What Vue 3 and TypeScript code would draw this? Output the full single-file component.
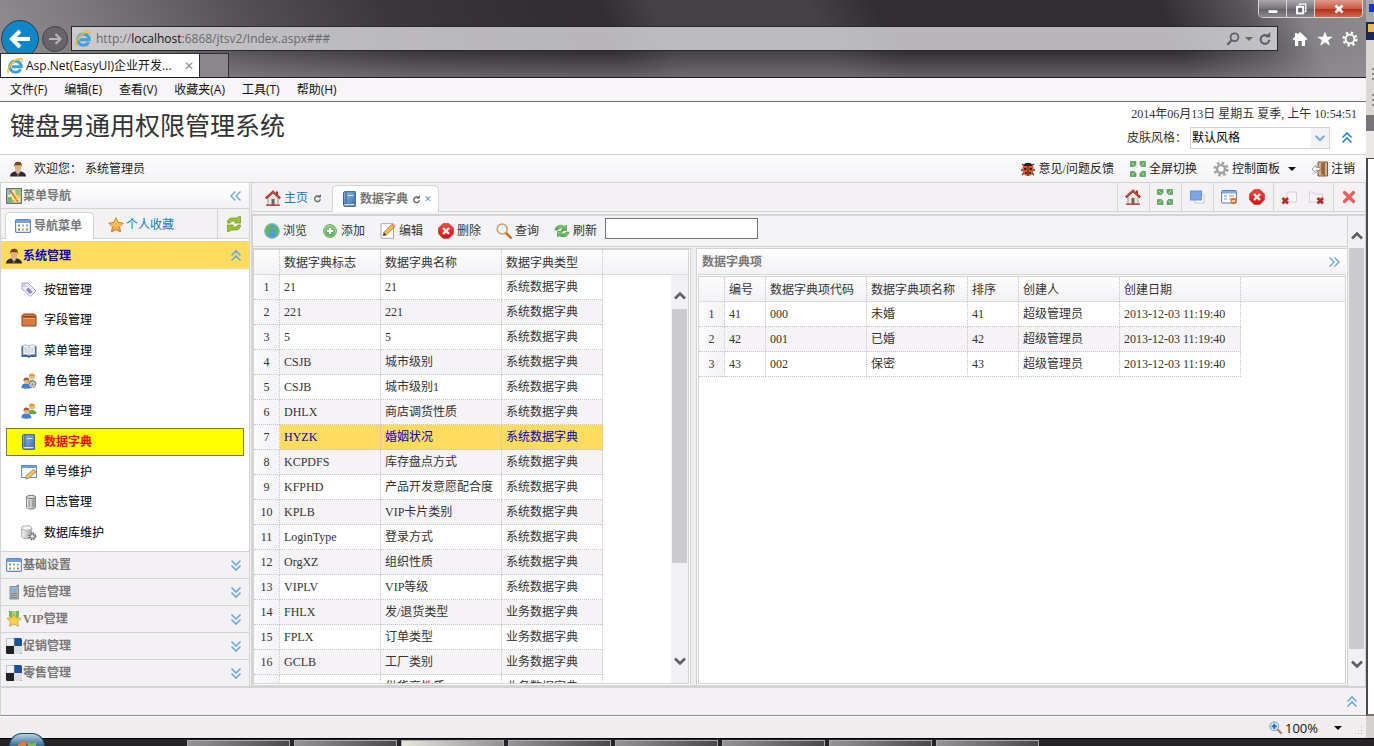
<script setup lang="ts">
import { ref } from 'vue'

interface MenuEntry { label: string; icon: string }

const browserMenus: string[] = ['文件(F)', '编辑(E)', '查看(V)', '收藏夹(A)', '工具(T)', '帮助(H)']

const navItems: MenuEntry[] = [
  { label: '按钮管理', icon: 'tag' },
  { label: '字段管理', icon: 'box' },
  { label: '菜单管理', icon: 'openbook' },
  { label: '角色管理', icon: 'roles' },
  { label: '用户管理', icon: 'users' },
  { label: '数据字典', icon: 'book' },
  { label: '单号维护', icon: 'edit-form' },
  { label: '日志管理', icon: 'bin' },
  { label: '数据库维护', icon: 'db' },
]

const sections: MenuEntry[] = [
  { label: '基础设置', icon: 'calendar' },
  { label: '短信管理', icon: 'phone' },
  { label: 'VIP管理', icon: 'medal' },
  { label: '促销管理', icon: 'delicious' },
  { label: '零售管理', icon: 'delicious' },
]

const tools: MenuEntry[] = [
  { label: '浏览', icon: 'globe' },
  { label: '添加', icon: 'add' },
  { label: '编辑', icon: 'pencil' },
  { label: '删除', icon: 'delete' },
  { label: '查询', icon: 'search' },
  { label: '刷新', icon: 'refresh' },
]

const tabToolGroups: MenuEntry[][] = [
  [{ label: '主页', icon: 'home' }],
  [{ label: '全屏', icon: 'fullscreen' }],
  [{ label: '窗口', icon: 'windows' }],
  [{ label: '关闭当前', icon: 'form-minus' }, { label: '关闭全部', icon: 'delete' }],
  [{ label: '关闭左侧', icon: 'close-left' }, { label: '关闭右侧', icon: 'close-right' }],
  [{ label: '退出', icon: 'cross' }],
]

const dictHead: string[] = ['数据字典标志', '数据字典名称', '数据字典类型']
const sys = '系统数据字典'
const biz = '业务数据字典'
const dictRows: string[][] = [
  ['21', '21', sys],
  ['221', '221', sys],
  ['5', '5', sys],
  ['CSJB', '城市级别', sys],
  ['CSJB', '城市级别1', sys],
  ['DHLX', '商店调货性质', sys],
  ['HYZK', '婚姻状况', sys],
  ['KCPDFS', '库存盘点方式', sys],
  ['KFPHD', '产品开发意愿配合度', sys],
  ['KPLB', 'VIP卡片类别', sys],
  ['LoginType', '登录方式', sys],
  ['OrgXZ', '组织性质', sys],
  ['VIPLV', 'VIP等级', sys],
  ['FHLX', '发/退货类型', biz],
  ['FPLX', '订单类型', biz],
  ['GCLB', '工厂类别', biz],
  ['GHSXZ', '供货商性质', biz],
]

const itemHead: string[] = ['编号', '数据字典项代码', '数据字典项名称', '排序', '创建人', '创建日期']
const itemRows: string[][] = [
  ['41', '000', '未婚', '41', '超级管理员', '2013-12-03 11:19:40'],
  ['42', '001', '已婚', '42', '超级管理员', '2013-12-03 11:19:40'],
  ['43', '002', '保密', '43', '超级管理员', '2013-12-03 11:19:40'],
]

const activeNav = ref(5)
const activeRow = ref(6)
const query = ref('')
const address = 'http://localhost:6868/jtsv2/Index.aspx###'
const addressParts = [address.slice(0, 7), address.slice(7, 16), address.slice(16)]
</script>

<template>
  <div class="screen">
    <svg class="sprite" aria-hidden="true">
      <defs>
        <linearGradient id="g-blue" x1="0" y1="0" x2="1" y2="1"><stop offset="0" stop-color="#8fb9e6" /><stop offset="1" stop-color="#3f72b5" /></linearGradient>
        <linearGradient id="g-green" x1="0" y1="0" x2="0" y2="1"><stop offset="0" stop-color="#8ed07f" /><stop offset="1" stop-color="#4fa54b" /></linearGradient>
        <linearGradient id="g-red" x1="0" y1="0" x2="0" y2="1"><stop offset="0" stop-color="#f5483f" /><stop offset="1" stop-color="#d80f0f" /></linearGradient>
        <linearGradient id="g-gold" x1="0" y1="0" x2="0" y2="1"><stop offset="0" stop-color="#ffe27a" /><stop offset="1" stop-color="#f0952a" /></linearGradient>
        <linearGradient id="g-grey" x1="0" y1="0" x2="1" y2="0"><stop offset="0" stop-color="#f4f4f4" /><stop offset="1" stop-color="#a2a2a2" /></linearGradient>
      </defs>
      <symbol id="ie" viewBox="0 0 16 16">
        <path d="M13.600 11.200A5.700 5.700 0 1 1 14.200 8.700H5" fill="none" stroke="#3ba0dc" stroke-width="3" />
        <path d="M1.600 15C-.4 12.600 3 5.600 8 2.600 12.600 0 16 0 15.300 3.800" fill="none" stroke="#f3bd27" stroke-width="1.700" />
      </symbol>
      <symbol id="person" viewBox="0 0 16 16">
        <path d="M0 15.500c0-3 2.600-4.500 5-5h6c2.400.5 5 2 5 5z" fill="#2c2d33" />
        <path d="M6 10.500h4l-2 5z" fill="#f4f4f4" /><path d="M7.500 11.500h1l.5 3-1 1-1-1z" fill="#b23c32" />
        <ellipse cx="8" cy="6.500" rx="3.200" ry="4" fill="#e6b27c" /><path d="M4.300 6C3.800 2 6 .8 8.200.8S12.300 2 11.700 6l-1-2c-2 .6-4 .2-5.200 0z" fill="#6f4a20" />
      </symbol>
      <symbol id="map" viewBox="0 0 16 16">
        <rect x=".7" y=".7" width="14.600" height="14.600" fill="#f3e9a0" stroke="#4c6570" stroke-width="1.200" />
        <path d="M1.500 1.500h5l-2 5h-3z" fill="#82bce8" /><path d="M9 1.500h5.500v6H10z" fill="#98c77a" /><path d="M1.500 9h4l2 5.500h-6z" fill="#76b276" />
        <path d="M4 2l8 12" stroke="#e46a22" stroke-width="1.500" /><path d="M14.500 7L7 14" stroke="#f3b635" stroke-width="1.400" />
      </symbol>
      <symbol id="calendar" viewBox="0 0 16 16">
        <rect x=".6" y="1.600" width="14.800" height="12.800" rx="1" fill="#fff" stroke="#6288bd" stroke-width="1.200" /><path d="M1 2h14v3H1z" fill="#72a1dc" />
        <path d="M3 7.500h2M3 11.500h2" stroke="#66a856" stroke-width="2" /><path d="M7 7.500h2M11 7.500h2" stroke="#7bb2e0" stroke-width="2" /><path d="M7 11.500h2" stroke="#e5b03c" stroke-width="2" /><path d="M11 11.500h2" stroke="#df6c54" stroke-width="2" />
      </symbol>
      <symbol id="star" viewBox="0 0 16 16"><path d="M8 .8l2.200 4.700 5 .7-3.600 3.600.9 5.100L8 12.500l-4.500 2.400.9-5.100L.8 6.200l5-.7z" fill="url(#g-gold)" stroke="#cf7a25" /></symbol>
      <symbol id="refresh" viewBox="0 0 16 16">
        <path d="M1 7C1.500 2.500 7 1 11 3.500L12.500 2v5.500H7L9 5.500C7 4.600 4.500 5 4 7z" fill="url(#g-green)" stroke="#4a9a47" stroke-width=".7" />
        <path d="M15 9c-.5 4.500-6 6-10 3.500L3.500 14V8.500H9L7 10.500c2 .9 4.500.5 5-1.500z" fill="url(#g-green)" stroke="#4a9a47" stroke-width=".7" />
      </symbol>
      <symbol id="sync" viewBox="0 0 16 16">
        <path d="M1.500 7c0-3.500 2-5 5-5h4.500L13 .5h1.500V7H8.500l2-2H7C4.800 5 4.500 6 4.500 7z" fill="#99c630" stroke="#6a941d" stroke-width=".7" />
        <path d="M14.500 9c0 3.500-2 5-5 5H5L3 15.500H1.500V9h6l-2 2H9c2.200 0 2.500-1 2.500-2z" fill="#99c630" stroke="#6a941d" stroke-width=".7" />
      </symbol>
      <symbol id="home" viewBox="0 0 16 16">
        <path d="M3 7.500L8 3l5 4.500V15H3z" fill="#eee9df" stroke="#8b8378" stroke-width=".8" /><path d="M11 1.500h2V5h-2z" fill="#ad3528" />
        <path d="M.8 8.400L8 1.700l7.200 6.700" fill="none" stroke="#a82b20" stroke-width="2.300" /><path d="M1.700 7.400L8 1.700l6.300 5.700" fill="none" stroke="#e7694f" stroke-width=".8" />
        <path d="M6.500 9h3v6h-3z" fill="#65666c" /><path d="M1 15.200h14" stroke="#b24538" stroke-width="1.400" />
      </symbol>
      <symbol id="book" viewBox="0 0 16 16">
        <path d="M3 .7h10.300v14.600H3c-1 0-1.400-.6-1.400-1.400V2C1.600 1.200 2 .7 3 .7z" fill="url(#g-blue)" stroke="#335782" /><path d="M4 1v12" stroke="#345f94" /><path d="M6 4.500h5.500" stroke="#dceafa" /><path d="M2.500 13.700h10" stroke="#e6eef7" stroke-width="1.200" />
      </symbol>
      <symbol id="globe" viewBox="0 0 16 16"><circle cx="8" cy="8" r="7.300" fill="#4c9edc" stroke="#8cc4a0" stroke-width="1.200" /><path d="M2 5c1-2.500 4-4 6-3.500L7 4l2 2-3 2-1 5-3-3zM10 3l3 1 1.500 4-2 5-2-3 1-2-3-2z" fill="#62b45d" /></symbol>
      <symbol id="add" viewBox="0 0 16 16"><circle cx="8" cy="8" r="6.400" fill="url(#g-green)" stroke="#67a861" /><circle cx="8" cy="8" r="5.500" fill="none" stroke="#a9dba0" stroke-width=".8" /><path d="M8 5v6M5 8h6" stroke="#fff" stroke-width="2.200" /></symbol>
      <symbol id="pencil" viewBox="0 0 16 16"><path d="M1 .7h12.500v14.600H1z" fill="#fff" stroke="#aaa7b8" /><path d="M3 12.800l1-3.500L11.700 1.500l2.800 2.400-8 8z" fill="#f4bb45" stroke="#a9772b" stroke-width=".8" /><path d="M3 12.800l1-3.500 2.500 2.600z" fill="#514a42" /><path d="M11.700 1.500l1-.9 2.700 2.500-.9.800z" fill="#e67c76" /></symbol>
      <symbol id="delete" viewBox="0 0 16 16"><path d="M5 .7h6L15.300 5v6L11 15.300H5L.7 11V5z" fill="url(#g-red)" stroke="#cd3c39" /><path d="M5 5l6 6M11 5l-6 6" stroke="#fff" stroke-width="2.400" /></symbol>
      <symbol id="search" viewBox="0 0 16 16"><path d="M10 10l4.700 4.700" stroke="#c87532" stroke-width="2.600" stroke-linecap="round" /><circle cx="6.200" cy="6" r="5" fill="#edf4fb" stroke="#d79b59" stroke-width="1.500" /><path d="M3.500 5c.5-1.500 1.500-2 3-2" stroke="#fff" stroke-width="1.300" fill="none" /></symbol>
      <symbol id="tag" viewBox="0 0 16 16"><path d="M1 1h6l8 8-5.500 5.500L1 7z" fill="#f2effb" stroke="#a5a0c8" /><circle cx="3.600" cy="3.600" r="1.100" fill="#fff" stroke="#9b95c0" stroke-width=".8" /><path d="M7 5.500l4.500 4.500-2.500 2L5 8z" fill="#8d7cd8" /></symbol>
      <symbol id="box" viewBox="0 0 16 16"><path d="M1 3.500L2.500 2h11L15 3.500V14H1z" fill="#d87a3c" stroke="#8f4420" /><path d="M1.500 4h13v1.500h-13z" fill="#8b431c" /><path d="M2 6.500h12" stroke="#eda776" /></symbol>
      <symbol id="openbook" viewBox="0 0 16 16"><path d="M.5 3h15v11h-6L8 15l-1.500-1h-6z" fill="#356297" /><path d="M2 2.500c2-1 4-.6 6 .7 2-1.300 4-1.700 6-.7V12c-2-.8-4-.5-6 .7-2-1.200-4-1.500-6-.7z" fill="#fff" stroke="#7b96b6" stroke-width=".7" /><path d="M8 3v9M3.500 5h3M3.500 7h3M3.500 9h3M9.500 5h3M9.500 7h3M9.500 9h3" stroke="#8ba0b8" stroke-width=".8" /></symbol>
      <symbol id="users" viewBox="0 0 16 16">
        <path d="M7.500 11c0-3 1-4 3.500-4s4.500 1.500 4.500 3.500c-2 1-4 1-8 .5z" fill="#62a749" /><circle cx="11" cy="4" r="2.800" fill="#eeb77c" /><path d="M8 3.500C8 1 9.500.5 11 .5s3 .8 3 3c-2-1-4-1-6 0z" fill="#d49a38" />
        <path d="M.5 15c0-3.500 1.500-4.500 4.500-4.500s5 1 5.500 4.500c-3 1-7 1-10 0z" fill="#3f7fda" /><circle cx="5.500" cy="8" r="2.800" fill="#eeb27b" /><path d="M2.500 8C2.500 5 4 4.500 5.500 4.500s3 .8 3 3.500c-2-1.300-4-1.300-6 0z" fill="#9b5b2c" />
      </symbol>
      <symbol id="roles" viewBox="0 0 16 16"><use href="#users" /><circle cx="11.500" cy="11.500" r="3" fill="#e6e6e6" stroke="#8c8f91" stroke-width="1.600" stroke-dasharray="1.600 .8" /><circle cx="11.500" cy="11.500" r="1.200" fill="#888" /></symbol>
      <symbol id="edit-form" viewBox="0 0 16 16"><rect x=".6" y="1.500" width="14.800" height="12" fill="#f6faff" stroke="#5f8dc9" /><path d="M1 2h14v2H1z" fill="#6b9fdd" /><path d="M4.500 15l1-3.500 7-6 2.500 2.500-7 6z" fill="#f5c05e" stroke="#a9782d" stroke-width=".8" /></symbol>
      <symbol id="bin" viewBox="0 0 16 16"><path d="M5.500 3h9v10.500c-1 2-8 2-9 0z" fill="url(#g-grey)" stroke="#828282" /><ellipse cx="10" cy="3" rx="4.700" ry="1.600" fill="#ddd" stroke="#777" /><path d="M8 6v7M12 6v7" stroke="#858585" /></symbol>
      <symbol id="db" viewBox="0 0 16 16"><path d="M.7 3v9c2 2 8 2 10 0V3z" fill="url(#g-grey)" stroke="#aaa" /><ellipse cx="5.700" cy="3" rx="5" ry="2.200" fill="#f6f6f6" stroke="#aaa" /><circle cx="11.300" cy="11.300" r="3.200" fill="#ddd" stroke="#707478" stroke-width="2" stroke-dasharray="1.500 1" /><circle cx="11.300" cy="11.300" r="2" fill="#eee" stroke="#707478" /></symbol>
      <symbol id="phone" viewBox="0 0 16 16"><path d="M4 2.500h7V1h1.500v14H4z" fill="#adb2b6" stroke="#777d82" stroke-width=".8" /><path d="M5.500 4.500h5V8h-5z" fill="#66b9ea" /><path d="M5.500 9.500h1M7.500 9.500h1M9.500 9.500h1M5.500 11.500h1M7.500 11.500h1M9.500 11.500h1M5.500 13.500h1M7.500 13.500h1M9.500 13.500h1" stroke="#57606a" /></symbol>
      <symbol id="medal" viewBox="0 0 16 16"><path d="M3 0h10v6l-5 2-5-2z" fill="#75b75d" /><path d="M6 0h4v6H6z" fill="#a9d48f" /><path d="M8 2.800l2.100 4 5 .6-3.500 3.100.9 4.800L8 13.200l-4.500 2.100.9-4.800L.9 7.400l5-.6z" fill="#f7ce45" stroke="#d49a34" stroke-width=".8" /></symbol>
      <symbol id="delicious" viewBox="0 0 16 16"><rect width="16" height="16" rx="1.500" fill="#1551a5" /><path d="M.3.300H8V8H.3z" fill="#f4f5f7" stroke="#c4c6ca" stroke-width=".6" /><path d="M0 8h8v8H1.500L0 14.500z" fill="#222225" /><path d="M8 8h8v6.500L14.500 16H8z" fill="#dadde2" /></symbol>
      <symbol id="fullscreen" viewBox="0 0 16 16"><g fill="#5fae5f" stroke="#3c9343" stroke-width=".6"><path d="M.5.500h5.500v3L4.500 5.500H.5zM15.500.500H10v3l1.500 2h4zM.5 15.500H6v-3l-1.500-2h-4zM15.500 15.500H10v-3l1.500-2h4z" /></g><path d="M1.800 1.800l2.500 2.500M14.200 1.800l-2.500 2.500M1.800 14.200l2.500-2.500M14.200 14.200l-2.500-2.500" stroke="#bfe6bb" /></symbol>
      <symbol id="windows" viewBox="0 0 16 16"><rect x="6" y="6" width="9" height="8" fill="#fff" stroke="#bdc7da" /><rect x="1.500" y="2" width="11" height="9" fill="#7ea5e6" stroke="#6a8fce" /></symbol>
      <symbol id="form-minus" viewBox="0 0 16 16"><rect x=".6" y="1.500" width="14.800" height="12.500" rx="1" fill="#fff" stroke="#5279bb" /><path d="M1 2h14v2.500H1z" fill="#80aae6" /><path d="M3 7h3M8 7h5M3 10h3M8 10h3" stroke="#739bd1" /><circle cx="12.500" cy="12" r="3.200" fill="#e47a28" /><path d="M10.800 12h3.400" stroke="#fff" stroke-width="1.200" /></symbol>
      <symbol id="close-left" viewBox="0 0 16 16"><path d="M6 3h9.500v10H6z" fill="#f6f4f7" stroke="#d4d0d6" /><path d="M1.500 9l5.500 5.500M7 9l-5.500 5.500" stroke="#b92828" stroke-width="2.800" /></symbol>
      <symbol id="close-right" viewBox="0 0 16 16"><path d="M.5 3h3l1 2h9v8H.5z" fill="#f6f4f7" stroke="#d4d0d6" /><path d="M8.500 9l5.500 5.500M14 9l-5.500 5.500" stroke="#b92828" stroke-width="2.800" /></symbol>
      <symbol id="cross" viewBox="0 0 16 16"><path d="M3.500 3.500l9 9M12.500 3.500l-9 9" stroke="#ec5d5b" stroke-width="3.200" stroke-linecap="round" /></symbol>
      <symbol id="bug" viewBox="0 0 16 16"><path d="M2 3l3 2M14 3l-3 2M1 9h14M2 14l3-3M14 14l-3-3" stroke="#35302f" stroke-width="1.300" /><path d="M4 4C4 1 12 1 12 4v2H4z" fill="#282425" /><path d="M3 5h10c2 5-1 10-5 10S1 10 3 5z" fill="#e8562a" /><path d="M8 5v10" stroke="#3b2320" /><circle cx="5.200" cy="8" r="1.200" fill="#2c2020" /><circle cx="10.800" cy="8" r="1.200" fill="#2c2020" /><circle cx="6" cy="12" r="1" fill="#2c2020" /><circle cx="10" cy="12" r="1" fill="#2c2020" /></symbol>
      <symbol id="gear" viewBox="0 0 16 16"><circle cx="8" cy="8" r="6.300" fill="none" stroke="currentColor" stroke-width="2.600" stroke-dasharray="2.500 2.448" /><circle cx="8" cy="8" r="4" fill="none" stroke="currentColor" stroke-width="2.400" /></symbol>
      <symbol id="exit" viewBox="0 0 16 16"><path d="M6 1h9.500v14H6z" fill="#d7b284" stroke="#7f5933" /><path d="M9 2.500l4-1.500v14l-4-2z" fill="#9d6739" /><path d="M0 8l4-4v2.500h4v3H4V12z" fill="#fff" stroke="#8893a4" stroke-width=".9" /></symbol>
      <symbol id="up2" viewBox="0 0 16 16"><path d="M3.500 7.500L8 3l4.500 4.500M3.500 12.500L8 8l4.500 4.500" fill="none" stroke="currentColor" stroke-width="1.600" /></symbol>
      <symbol id="down2" viewBox="0 0 16 16"><path d="M3.500 3.500L8 8l4.500-4.500M3.500 8.500L8 13l4.500-4.500" fill="none" stroke="currentColor" stroke-width="1.600" /></symbol>
      <symbol id="left2" viewBox="0 0 16 16"><path d="M7.500 3.500L3 8l4.500 4.500M12.500 3.500L8 8l4.500 4.500" fill="none" stroke="currentColor" stroke-width="1.400" /></symbol>
      <symbol id="right2" viewBox="0 0 16 16"><path d="M3.500 3.500L8 8l-4.500 4.500M8.500 3.500L13 8l-4.500 4.500" fill="none" stroke="currentColor" stroke-width="1.400" /></symbol>
      <symbol id="chev-up" viewBox="0 0 16 16"><path d="M3 10.500L8 5.500l5 5" fill="none" stroke="currentColor" stroke-width="2.600" /></symbol>
      <symbol id="chev-down" viewBox="0 0 16 16"><path d="M3 5.500l5 5 5-5" fill="none" stroke="currentColor" stroke-width="2.600" /></symbol>
      <symbol id="reload" viewBox="0 0 16 16"><path d="M12 5.500A5 5 0 1 0 13 9" fill="none" stroke="currentColor" stroke-width="2.400" /><path d="M8 6h6V0z" fill="currentColor" /></symbol>
      <symbol id="lens" viewBox="0 0 16 16"><circle cx="9.700" cy="6" r="4.500" fill="none" stroke="currentColor" stroke-width="2" /><path d="M6.500 9.500L1.500 14.500" stroke="currentColor" stroke-width="2.600" /></symbol>
      <symbol id="house" viewBox="0 0 16 16"><path d="M8 1l7.500 7-1.300 1.200L13 8.200V15H9.800v-5H6.200v5H3V8.200L1.800 9.200.5 8l2.500-2.300V2h2v1.800z" fill="currentColor" /></symbol>
      <symbol id="star-flat" viewBox="0 0 16 16"><path d="M8 .4l2 5.300h5.700l-4.500 3.500 1.700 5.600L8 11.500l-4.900 3.300 1.700-5.600L.3 5.700H6z" fill="currentColor" /></symbol>
      <symbol id="cog" viewBox="0 0 16 16"><circle cx="8" cy="8" r="6.400" fill="none" stroke="currentColor" stroke-width="2.400" stroke-dasharray="2.400 2.627" /><circle cx="8" cy="8" r="4.400" fill="none" stroke="currentColor" stroke-width="1.900" /></symbol>
      <symbol id="arrow-left" viewBox="0 0 24 24"><path d="M22 12H5M12 4l-8 8 8 8" fill="none" stroke="#fff" stroke-width="4" /></symbol>
      <symbol id="arrow-right" viewBox="0 0 16 16"><path d="M2 8h11M8.500 3l5 5-5 5" fill="none" stroke="#b5b3b6" stroke-width="2.200" /></symbol>
      <symbol id="magnify" viewBox="0 0 16 16"><path d="M9 9l5.500 5.500" stroke="#a88a5a" stroke-width="2.500" /><circle cx="6" cy="6" r="5" fill="#d7ebfb" stroke="#5f8fc4" /><path d="M6 3v6M3 6h6" stroke="#2368bd" stroke-width="2" /></symbol>
    </svg>

    <div class="desk">
      <main class="browser">
        <header class="chrome">
          <div class="title-row">
            <div class="win-btns">
              <button aria-label="最小化"><svg viewBox="0 0 16 16"><path d="M3 11h10" stroke="#fff" stroke-width="3" /></svg></button>
              <button aria-label="还原"><svg viewBox="0 0 16 16"><path d="M6 4V2.500h7.500V11H12" fill="none" stroke="#fff" stroke-width="1.400" /><rect x="3.500" y="5.500" width="7" height="7.500" fill="none" stroke="#fff" stroke-width="2.200" /></svg></button>
              <button class="close" aria-label="关闭"><svg viewBox="0 0 16 16"><path d="M4 4l8 8M12 4l-8 8" stroke="#fff" stroke-width="3" /></svg></button>
            </div>
          </div>
          <div class="address-row">
            <button class="back" aria-label="后退"><svg><use href="#arrow-left" /></svg></button>
            <button class="forward" aria-label="前进"><svg><use href="#arrow-right" /></svg></button>
            <div class="address">
              <svg class="i"><use href="#ie" /></svg>
              <span class="url">{{ addressParts[0] }}<b>{{ addressParts[1] }}</b>{{ addressParts[2] }}</span>
              <svg class="i14"><use href="#lens" /></svg><i class="caret"></i><svg class="i14"><use href="#reload" /></svg>
            </div>
            <div class="chrome-icons">
              <svg class="i"><use href="#house" /></svg><svg class="i"><use href="#star-flat" /></svg><svg class="i"><use href="#cog" /></svg>
            </div>
          </div>
          <div class="page-tabs">
            <div class="page-tab"><svg class="i"><use href="#ie" /></svg><span>Asp.Net(EasyUI)企业开发...</span><button aria-label="关闭标签">✕</button></div>
            <button class="new-tab" aria-label="新标签"></button>
          </div>
        </header>
        <nav class="menubar"><button v-for="m in browserMenus" :key="m">{{ m }}</button></nav>

        <section class="app-head">
          <h1>键盘男通用权限管理系统</h1>
          <div class="head-right">
            <time>2014年06月13日 星期五 夏季, 上午 10:54:51</time>
            <div class="skin">
              <label for="skin">皮肤风格：</label>
              <div class="combo"><select id="skin"><option>默认风格</option></select><svg class="i combo-arrow"><use href="#chev-down" /></svg></div>
              <svg class="i link"><use href="#up2" /></svg>
            </div>
          </div>
        </section>
        <section class="welcome">
          <svg class="i"><use href="#person" /></svg><span class="hello">欢迎您：</span><span>系统管理员</span>
          <div class="actions">
            <button><svg class="i"><use href="#bug" /></svg>意见/问题反馈</button>
            <button><svg class="i"><use href="#fullscreen" /></svg>全屏切换</button>
            <button><svg class="i grey"><use href="#gear" /></svg>控制面板<i class="caret dark"></i></button>
            <button><svg class="i"><use href="#exit" /></svg>注销</button>
          </div>
        </section>

        <div class="work">
          <aside class="side">
            <div class="side-title"><svg class="i"><use href="#map" /></svg><b>菜单导航</b><svg class="i pale end"><use href="#left2" /></svg></div>
            <div class="side-tabs">
              <button class="side-tab on"><svg class="i"><use href="#calendar" /></svg>导航菜单</button>
              <button class="side-tab"><svg class="i"><use href="#star" /></svg>个人收藏</button>
              <button class="sync" aria-label="刷新菜单"><svg class="i"><use href="#sync" /></svg></button>
            </div>
            <div class="accordion">
              <button class="acc open"><svg class="i"><use href="#person" /></svg><b>系统管理</b><svg class="i pale end"><use href="#up2" /></svg></button>
              <ul>
                <li v-for="(n, k) in navItems" :key="n.label"><button :class="{ on: k === activeNav }" @click="activeNav = k"><svg class="i"><use :href="'#' + n.icon" /></svg>{{ n.label }}</button></li>
              </ul>
              <button v-for="s in sections" :key="s.label" class="acc"><svg class="i"><use :href="'#' + s.icon" /></svg><b>{{ s.label }}</b><svg class="i pale end"><use href="#down2" /></svg></button>
            </div>
          </aside>

          <section class="center">
            <div class="tabbar">
              <button class="tab"><svg class="i"><use href="#home" /></svg>主页<svg class="i8"><use href="#reload" /></svg></button>
              <button class="tab on"><svg class="i"><use href="#book" /></svg><b>数据字典</b><svg class="i8"><use href="#reload" /></svg><i class="x">✕</i></button>
              <div class="tab-tools">
                <div v-for="(g, k) in tabToolGroups" :key="k" class="tool-group"><button v-for="t in g" :key="t.label" :aria-label="t.label"><svg class="i"><use :href="'#' + t.icon" /></svg></button></div>
              </div>
            </div>
            <div class="page">
              <div class="page-main">
                <div class="toolbar">
                  <button v-for="t in tools" :key="t.label"><svg class="i"><use :href="'#' + t.icon" /></svg>{{ t.label }}</button>
                  <input v-model="query" type="text" aria-label="查询内容">
                </div>
                <div class="split">
                  <div class="pane left">
                    <div class="grid-wrap">
                      <div class="head-strip"></div>
                      <table class="grid">
                        <colgroup><col class="c-no"><col class="c-m"><col class="c-l"><col class="c-m"></colgroup>
                        <thead><tr><th></th><th v-for="h in dictHead" :key="h">{{ h }}</th></tr></thead>
                        <tbody><tr v-for="(r, k) in dictRows" :key="k" :class="{ on: k === activeRow }" @click="activeRow = k"><td class="no">{{ k + 1 }}</td><td v-for="(c, j) in r" :key="j">{{ c }}</td></tr></tbody>
                      </table>
                      <div class="scroll inner"><svg class="i"><use href="#chev-up" /></svg><div class="thumb"></div><svg class="i"><use href="#chev-down" /></svg></div>
                    </div>
                  </div>
                  <div class="splitter"></div>
                  <div class="pane right">
                    <div class="pane-title"><b>数据字典项</b><svg class="i pale end"><use href="#right2" /></svg></div>
                    <div class="grid-wrap">
                      <div class="head-strip"></div>
                      <table class="grid">
                        <colgroup><col class="c-no"><col class="c-s"><col class="c-m"><col class="c-m"><col class="c-o"><col class="c-m"><col class="c-l"></colgroup>
                        <thead><tr><th></th><th v-for="h in itemHead" :key="h">{{ h }}</th></tr></thead>
                        <tbody><tr v-for="(r, k) in itemRows" :key="k"><td class="no">{{ k + 1 }}</td><td v-for="(c, j) in r" :key="j">{{ c }}</td></tr></tbody>
                      </table>
                    </div>
                  </div>
                </div>
              </div>
              <div class="scroll outer"><svg class="i"><use href="#chev-up" /></svg><div class="thumb"></div><svg class="i"><use href="#chev-down" /></svg></div>
            </div>
          </section>
        </div>
        <footer class="south"><svg class="i pale"><use href="#up2" /></svg></footer>
        <div class="status"><svg class="i14"><use href="#magnify" /></svg><span>100%</span><i class="caret dark"></i><i class="grip"></i></div>
      </main>
      <div class="edge"><div class="e1"></div><div class="e2"></div><div class="e3"></div><div class="e4"></div><div class="e5"></div></div>
    </div>
    <div class="taskbar"><i class="orb"><svg viewBox="0 0 20 12"><path d="M1 8q4-5 8-3v7H1z" fill="#e87932" /><path d="M11 5q4 3 8 0v7h-8z" fill="#82b94a" /></svg></i><span v-for="n in 8" :key="n" :class="{ lit: n === 3 }"></span></div>
  </div>
</template>

<style>
html, body, #app { height: 100%; }
body { margin: 0; overflow: hidden; }
</style>

<style scoped>
* { box-sizing: border-box; }
.screen { display: flex; flex-direction: column; height: 100vh; min-height: 600px; font: 12px/16px "Liberation Serif", "Noto Sans CJK SC", serif; color: #333; background: #fff; }
.sprite { position: absolute; width: 0; height: 0; }
button { font: inherit; color: inherit; border: 0; background: none; padding: 0; margin: 0; display: flex; align-items: center; white-space: nowrap; }
svg { display: block; flex: none; }
.i { width: 16px; height: 16px; }
.i14 { width: 14px; height: 14px; }
.i8 { width: 9px; height: 9px; color: #666; }
.end { margin-left: auto; }
.pale { color: #69aadd; }
.link { color: #1f84cc; }
.grey { color: #a3a3a3; }
.caret { width: 0; height: 0; border: 4px solid transparent; border-top-color: #666; border-bottom: 0; }
.caret.dark { border-top-color: #111; }
.desk { flex: 1; min-height: 0; display: flex; }
.browser { flex: 1; min-width: 0; display: flex; flex-direction: column; }

.chrome { height: 78px; flex: none; display: flex; flex-direction: column; border-bottom: 1px solid #1d1b1e; font-family: "Open Sans", "Noto Sans CJK SC", sans-serif; background: linear-gradient(to bottom, transparent 66%, rgba(150, 148, 152, .5) 100%), linear-gradient(65deg, #929093 0, #7b797c 8%, #514f52 20%, #39373a 30%, #302e31 42%, #302e31 45%, #444245 49%, #444245 60%, #302e31 65%, #302e31 85%, #58565a 91%, #858386 95%, #8c8a8d 100%); }
.title-row { height: 26px; display: flex; justify-content: flex-end; align-items: flex-start; padding-right: 3px; }
.win-btns { display: flex; border: 1px solid #d5d3d6; border-top: 0; border-radius: 0 0 5px 5px; overflow: hidden; }
.win-btns button { width: 28px; height: 17px; justify-content: center; background: linear-gradient(#aaa8ad, #77757a 50%, #626066 51%, #8a888e); border-right: 1px solid #d5d3d6; }
.win-btns .close { width: 47px; border-right: 0; background: linear-gradient(#dc9a8c, #cb5a45 50%, #b22b18 51%, #d3674a); }
.win-btns svg { width: 14px; height: 14px; }
.address-row { height: 25px; display: flex; align-items: center; padding: 0 8px 0 1px; }
.back { width: 38px; height: 38px; border-radius: 50%; background: #0e86c8; border: 1px solid #3b3a40; justify-content: center; flex: none; }
.back svg { width: 24px; height: 24px; }
.forward { width: 26px; height: 26px; margin: 0 3px; border-radius: 50%; background: #67656a; border: 1px solid #444247; justify-content: center; flex: none; }
.forward svg { width: 16px; height: 16px; }
.address { flex: 1; height: 25px; display: flex; align-items: center; gap: 5px; padding: 0 5px 0 3px; background: rgba(225, 224, 227, .77); border: 1px solid #29272a; color: #626064; }
.url { flex: 1; font-size: 12px; color: #6a686c; }
.url b { font-weight: 400; color: #151515; }
.chrome-icons { display: flex; gap: 9px; margin-left: 14px; color: #fff; }
.page-tabs { position: relative; flex: 1; display: flex; align-items: flex-end; }
.page-tab { width: 200px; height: 24px; display: flex; align-items: center; gap: 3px; padding: 0 5px 0 6px; background: #fff; border: 1px solid #302e32; border-bottom: 0; font-size: 12px; color: #111; white-space: nowrap; }
.page-tab button { margin-left: auto; color: #929092; font-size: 12px; }
.new-tab { width: 29px; height: 24px; background: #89878a; border: 1px solid #302e32; border-left: 0; border-bottom: 0; }
.menubar { height: 24px; flex: none; display: flex; align-items: center; gap: 17px; padding-left: 10px; background: #f7f5f8; border-bottom: 1px solid #706e72; font-family: "Open Sans", "Noto Sans CJK SC", sans-serif; color: #111; }

.app-head { height: 52px; flex: none; display: flex; justify-content: space-between; padding: 4px 9px 0 10px; background: #fff; }
h1 { margin: 0; font-size: 25px; line-height: 42px; font-weight: 400; letter-spacing: normal; }
.head-right { display: flex; flex-direction: column; align-items: flex-end; gap: 5px; }
.skin { display: flex; align-items: center; margin-right: 2px; }
.skin label { width: 63px; }
.combo { position: relative; width: 140px; height: 22px; border: 1px solid #d3d3d3; margin-right: 9px; background: #fff; }
.combo select { width: 100%; height: 20px; border: 0; appearance: none; background: transparent; font: inherit; color: #000; padding: 0 1px; }
.combo-arrow { position: absolute; right: 0; top: 0; width: 18px; height: 20px; padding: 2px; background: #f3f2f5; color: #77b3df; pointer-events: none; }
.welcome { height: 28px; flex: none; display: flex; align-items: center; padding: 0 10px; border-top: 1px solid #d3d3d3; background: linear-gradient(#fdfcfd, #f4f2f5); color: #222; }
.hello { margin-left: 8px; width: 51px; }
.actions { margin: 0 1px 0 auto; display: flex; gap: 16px; }
.actions button { gap: 3px; }
.actions .caret { margin-left: 5px; }

.work { flex: 1; min-height: 0; display: flex; gap: 1px; background: #f3f1f4; border-top: 1px solid #d3d3d3; }
.side { width: 250px; flex: none; display: flex; flex-direction: column; border: 1px solid #d3d3d3; border-width: 0 1px; background: #fff; }
.side-title { height: 26px; flex: none; display: flex; align-items: center; gap: 1px; padding: 0 5px; color: #777; background: linear-gradient(#fff, #f3f1f4); border-bottom: 1px solid #d3d3d3; }
.side-tabs { height: 30px; flex: none; display: flex; align-items: flex-end; padding-left: 4px; background: #f3f1f4; border-bottom: 1px solid #d3d3d3; }
.side-tab { height: 27px; padding: 0 10px 0 14px; gap: 2px; color: #0a7fc0; }
.side-tab.on { margin-bottom: -1px; background: #fff; border: 1px solid #d3d3d3; border-bottom: 0; border-radius: 5px 5px 0 0; color: #777; font-weight: 700; padding: 0 11px 0 9px; gap: 3px; }
.sync { margin-left: auto; width: 32px; height: 29px; justify-content: center; border-left: 1px solid #d3d3d3; }
.accordion { flex: 1; min-height: 0; display: flex; flex-direction: column; padding-top: 2px; }
.acc { height: 27px; flex: none; gap: 1px; padding: 0 5px; background: #f3f1f4; border-top: 1px solid #d3d3d3; color: #777; }
.acc.open { height: 28px; background: #ffdc5e; color: #00c; }
ul { flex: 1; min-height: 0; display: flex; flex-direction: column; list-style: none; margin: 0; padding: 6px 5px 3px; }
li { flex: 1; display: flex; padding: 1px 0; }
li button { flex: 1; padding-left: 14px; gap: 7px; border: 1px solid transparent; color: #000; }
li button.on { background: #ff0; border-color: #77774a; color: #f00; font-weight: 700; }

.center { flex: 1; min-width: 0; display: flex; flex-direction: column; border: 1px solid #d3d3d3; border-width: 0 1px 0 1px; }
.tabbar { height: 29px; flex: none; display: flex; align-items: flex-end; padding-left: 4px; border-bottom: 1px solid #d3d3d3; }
.tab { height: 26px; padding: 0 10px 0 9px; gap: 3px; color: #0a7fc0; }
.tab .i8 { margin-left: 2px; }
.tab.on { margin-bottom: -1px; height: 27px; padding: 0 6px 0 9px; gap: 2px; background: #fff; border: 1px solid #d3d3d3; border-bottom: 0; border-radius: 5px 5px 0 0; color: #777; }
.x { font: 700 9px/12px "DejaVu Sans", sans-serif; color: #6394c4; margin-left: 1px; }
.tab-tools { margin-left: auto; display: flex; height: 28px; border-left: 1px solid #d3d3d3; }
.tool-group { display: flex; align-items: center; gap: 12px; padding: 0 8px 0 7px; border-right: 1px solid #d3d3d3; }
.tool-group:last-child { border-right: 0; }
.page { flex: 1; min-height: 0; display: flex; margin-top: 2px; border-top: 2px solid #d3d3d3; }
.page-main { flex: 1; min-width: 0; display: flex; flex-direction: column; border: 1px solid #d3d3d3; border-top: 0; }
.toolbar { height: 31px; flex: none; display: flex; align-items: center; gap: 16px; padding-left: 11px; background: #f4f3f6; border-bottom: 1px solid #d3d3d3; }
.toolbar button { gap: 3px; width: 42px; }
.toolbar input { width: 153px; height: 21px; margin: 0 0 5px -7px; border: 1px solid #737176; background: #fff; padding: 0 4px; font: inherit; }
.split { flex: 1; min-height: 0; display: flex; padding-top: 1px; }
.pane { min-width: 0; display: flex; flex-direction: column; background: #fff; padding: 0 1px 1px 0; border-top: 1px solid #d3d3d3; }
.left { width: 437px; flex: none; }
.right { flex: 1; border-left: 1px solid #d3d3d3; padding: 0 1px 1px; }
.splitter { width: 6px; flex: none; background: #eeecef; border-left: 1px solid #d3d3d3; }
.pane-title { height: 26px; flex: none; display: flex; align-items: center; padding: 0 4px; color: #777; background: linear-gradient(#fff, #f3f1f4); border-bottom: 1px solid #d3d3d3; margin-bottom: 1px; }
.grid-wrap { position: relative; flex: 1; min-height: 0; overflow: hidden; border: 1px solid #d3d3d3; background: #fff; }
.head-strip { position: absolute; left: 0; right: 0; top: 0; height: 25px; background: linear-gradient(#fdfcfd, #f3f1f4); border-bottom: 1px solid #dddbdf; }
.grid { position: relative; table-layout: fixed; width: 0; border-collapse: separate; border-spacing: 0; }
.c-no { width: 26px; } .c-s { width: 41px; } .c-o { width: 51px; } .c-m { width: 101px; } .c-l { width: 121px; }
th, td { height: 25px; padding: 0 0 0 4px; font-weight: 400; text-align: left; white-space: nowrap; overflow: hidden; border-right: 1px dotted #c4c2c6; line-height: 16px; }
td { border-bottom: 1px dotted #c4c2c6; }
tbody tr:nth-child(even) td { background: #f5f3f6; }
tbody tr td.no { padding: 0; text-align: center; background: linear-gradient(90deg, #fbfafc, #f3f1f4); }
tbody tr.on td:not(.no) { background: #ffdc5e; color: #00c; }
.scroll { display: flex; flex-direction: column; align-items: center; background: #f1f0f3; color: #5f5d61; }
.scroll .thumb { width: 15px; background: #cbcacd; }
.inner { position: absolute; right: 0; top: 25px; bottom: 0; width: 17px; padding: 13px 0 14px; }
.inner .thumb { height: 254px; margin: 5px 0 auto; }
.outer { width: 17px; flex: none; padding: 12px 0 14px; }
.outer .thumb { flex: 1; margin: 4px 0 7px; }
.south { height: 30px; flex: none; display: flex; align-items: center; justify-content: flex-end; padding-right: 6px; background: #f3f1f4; border-top: 2px solid #d3d3d3; border-bottom: 1px solid #8d8b8e; border-left: 1px solid #d3d3d3; }
.status { height: 22px; flex: none; display: flex; align-items: center; justify-content: flex-end; padding-right: 3px; background: #f0edee; border-top: 1px solid #fff; font: 13px/16px "Open Sans", sans-serif; color: #111; }
.status span { margin: 0 16px 0 2px; }
.grip { width: 9px; height: 9px; margin: 6px 0 0 12px; background: radial-gradient(circle, #aaa 1px, transparent 1px) 0 0 / 3px 3px; clip-path: polygon(100% 0, 100% 100%, 0 100%); }

.edge { width: 8px; flex: none; display: flex; flex-direction: column; background: #d6d2cf; }
.e1 { height: 22px; background: linear-gradient(#1638c6, #1638c6) 3px 4px / 5px 8px no-repeat, #aaa7ab; }
.e2 { height: 18px; background: linear-gradient(#e6bb4a, #e6bb4a) 2px 2px / 6px 8px no-repeat, #14285c; }
.e3 { height: 75px; background: repeating-linear-gradient(#888 0 2px, transparent 2px 5px) 6px 28px / 2px 14px no-repeat, repeating-linear-gradient(#888 0 2px, transparent 2px 5px) 6px 54px / 2px 14px no-repeat, #dcd8d5; }
.e4 { height: 43px; background: linear-gradient(#77757a 0 16px, #ece8e5 16px); }
.e5 { flex: 1; margin-bottom: 22px; background: #fff; border-left: 2px solid #4b494d; border-top: 1px solid #4b494d; border-bottom: 2px solid #77757a; }
.taskbar { position: relative; height: 8px; flex: none; display: flex; gap: 4px; padding: 1px 8px 0 187px; background: #252326; border-top: 1px solid #000; overflow: visible; }
.taskbar span { width: 103px; background: linear-gradient(100deg, #969497, #4a484b); border: 1px solid #aaa8ab; border-bottom: 0; }
.taskbar .lit { background: linear-gradient(100deg, #e7e6df, #929092); }
.orb { position: absolute; left: 9px; bottom: 0; width: 36px; height: 13px; overflow: hidden; border-radius: 18px 18px 0 0; background: linear-gradient(#b6d2e4, #376a90); border: 1px solid #1f4864; border-bottom: 0; padding: 3px 7px 0; }
</style>
